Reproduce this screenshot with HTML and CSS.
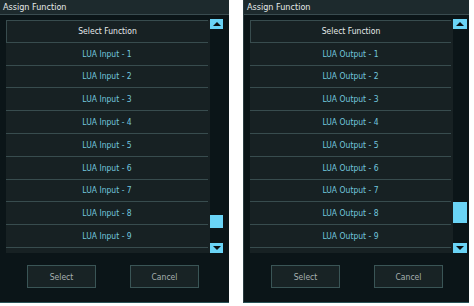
FILE: index.html
```html
<!DOCTYPE html>
<html>
<head>
<meta charset="utf-8">
<link rel="stylesheet" href="styles.css">
</head>
<body>
<div class="screen">
  <div class="panel panel-left">
    <div class="title">Assign Function</div>
    <div class="content">
      <div class="listwrap">
        <div class="list">
          <div class="row head">Select Function</div>
          <div class="row">LUA Input - 1</div>
          <div class="row">LUA Input - 2</div>
          <div class="row">LUA Input - 3</div>
          <div class="row">LUA Input - 4</div>
          <div class="row">LUA Input - 5</div>
          <div class="row">LUA Input - 6</div>
          <div class="row">LUA Input - 7</div>
          <div class="row">LUA Input - 8</div>
          <div class="row">LUA Input - 9</div>
        </div>
        <div class="scroll">
          <div class="arrow up"><span class="tri-up"></span></div>
          <div class="track"><div class="thumb" style="top:186px;height:13px"></div></div>
          <div class="arrow down"><span class="tri-down"></span></div>
        </div>
      </div>
      <div class="buttons">
        <div class="btn">Select</div>
        <div class="btn">Cancel</div>
      </div>
    </div>
  </div>
  <div class="panel panel-right">
    <div class="title">Assign Function</div>
    <div class="content">
      <div class="listwrap">
        <div class="list">
          <div class="row head">Select Function</div>
          <div class="row">LUA Output - 1</div>
          <div class="row">LUA Output - 2</div>
          <div class="row">LUA Output - 3</div>
          <div class="row">LUA Output - 4</div>
          <div class="row">LUA Output - 5</div>
          <div class="row">LUA Output - 6</div>
          <div class="row">LUA Output - 7</div>
          <div class="row">LUA Output - 8</div>
          <div class="row">LUA Output - 9</div>
        </div>
        <div class="scroll wide">
          <div class="arrow up"><span class="tri-up"></span></div>
          <div class="track"><div class="thumb" style="top:173px;height:21px"></div></div>
          <div class="arrow down"><span class="tri-down"></span></div>
        </div>
      </div>
      <div class="buttons">
        <div class="btn">Select</div>
        <div class="btn">Cancel</div>
      </div>
    </div>
  </div>
</div>
</body>
</html>
```

FILE: styles.css
```css
html, body {
  margin: 0;
  padding: 0;
  background: #ffffff;
}
body {
  width: 474px;
  height: 306px;
  overflow: hidden;
  font-family: "DejaVu Sans Condensed", "DejaVu Sans", sans-serif;
}
.screen {
  display: flex;
  gap: 14px;
  align-items: flex-start;
}
.panel {
  height: 303px;
  background: #0b1518;
  display: flex;
  flex-direction: column;
  box-sizing: border-box;
  border-bottom: 1px solid #2a5458;
}
.panel-left {
  width: 229px;
}
.panel-right {
  width: 226px;
  border-left: 1px solid #2a3c40;
}
.title {
  height: 14px;
  line-height: 14px;
  background: #1d2a2d;
  border-bottom: 1px solid #3a4c50;
  color: #e4e8e8;
  font-size: 9px;
  padding-left: 3px;
  white-space: nowrap;
}
.content {
  flex: 1;
  display: flex;
  flex-direction: column;
  padding: 5px 0 0 6px;
}
.listwrap {
  display: flex;
  height: 233px;
}
.list {
  width: 204px;
  background: #172123;
  display: flex;
  flex-direction: column;
  box-sizing: border-box;
}
.panel-right .list {
  width: 203px;
}
.row {
  height: 21.8px;
  border-bottom: 1px solid #384c4e;
  margin-right: 2px;
  display: flex;
  align-items: center;
  justify-content: center;
  font-size: 8.5px;
  color: #72c6de;
  white-space: nowrap;
  flex: none;
}
.row.head {
  color: #e6eaea;
  border-top: 1px solid #384c4e;
  border-left: 1px solid #384c4e;
  height: 20.8px;
}
.scroll {
  width: 13px;
  display: flex;
  flex-direction: column;
  margin-top: -1px;
}
.scroll.wide {
  width: 14px;
}
.arrow {
  height: 10px;
  background: #6ad4f6;
  display: flex;
  align-items: center;
  justify-content: center;
  flex: none;
}
.tri-up {
  width: 0;
  height: 0;
  border-left: 4px solid transparent;
  border-right: 4px solid transparent;
  border-bottom: 4px solid #0a1012;
}
.tri-down {
  width: 0;
  height: 0;
  border-left: 4px solid transparent;
  border-right: 4px solid transparent;
  border-top: 4px solid #0a1012;
}
.track {
  flex: 1;
  position: relative;
}
.thumb {
  position: absolute;
  left: 0;
  right: 0;
  background: #6ad4f6;
}
.buttons {
  display: flex;
  margin-top: 12px;
  padding-left: 21px;
  gap: 34px;
}
.btn {
  width: 69px;
  height: 23px;
  box-sizing: border-box;
  background: #182325;
  border: 1px solid #3a5556;
  color: #a7b0b0;
  font-size: 8.5px;
  display: flex;
  align-items: center;
  justify-content: center;
}
```
